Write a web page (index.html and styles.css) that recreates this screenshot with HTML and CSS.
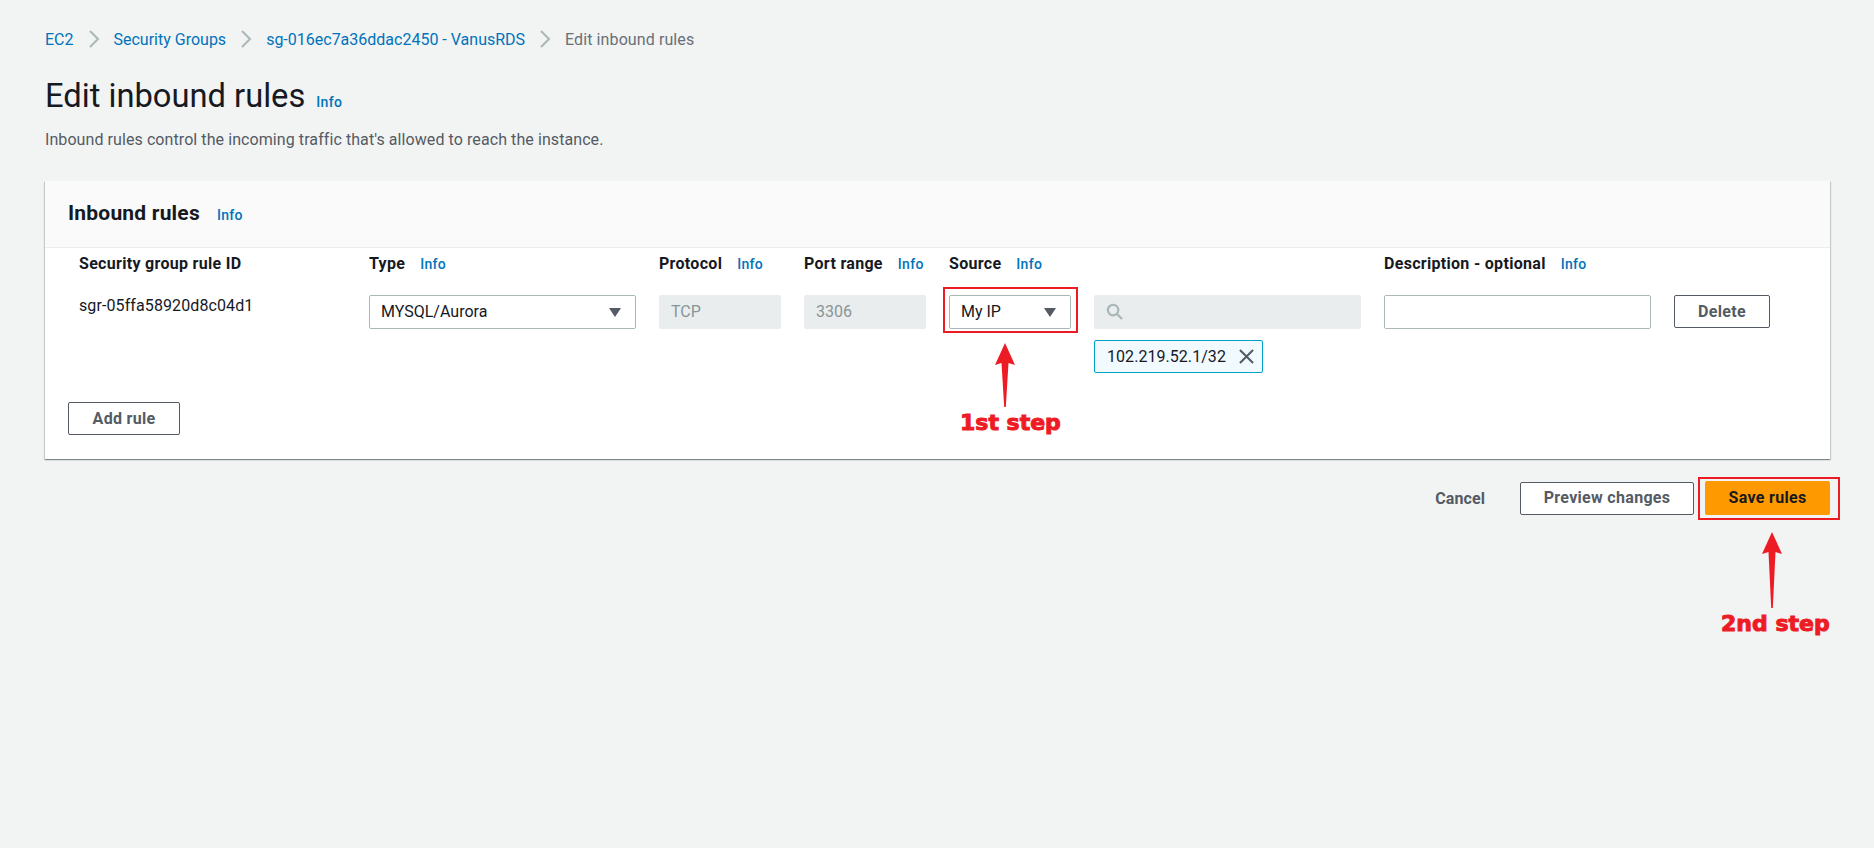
FILE: index.html
```html
<!DOCTYPE html>
<html lang="en">
<head>
    <meta charset="UTF-8">
    <title>Edit inbound rules</title>
    <link rel="stylesheet" href="styles.css">
</head>
<body>
    <div class="page">
        <nav class="crumbs">
            <a href="#">EC2</a>
            <svg class="chev" viewBox="0 0 12 18"><path d="M2 1l8 8-8 8"/></svg>
            <a href="#">Security Groups</a>
            <svg class="chev" viewBox="0 0 12 18"><path d="M2 1l8 8-8 8"/></svg>
            <a href="#">sg-016ec7a36ddac2450 - VanusRDS</a>
            <svg class="chev" viewBox="0 0 12 18"><path d="M2 1l8 8-8 8"/></svg>
            <span class="current">Edit inbound rules</span>
        </nav>

        <div class="title-row">
            <h1>Edit inbound rules</h1>
            <a href="#" class="info">Info</a>
        </div>
        <p class="lead">Inbound rules control the incoming traffic that's allowed to reach the instance.</p>

        <section class="card">
            <div class="card-head">
                <h2>Inbound rules</h2>
                <a href="#" class="info">Info</a>
            </div>
            <div class="rules">
                <div class="th">Security group rule ID</div>
                <div class="th">Type <a href="#" class="info">Info</a></div>
                <div class="th">Protocol <a href="#" class="info">Info</a></div>
                <div class="th">Port range <a href="#" class="info">Info</a></div>
                <div class="th">Source <a href="#" class="info">Info</a></div>
                <div class="th"></div>
                <div class="th">Description - optional <a href="#" class="info">Info</a></div>
                <div class="th"></div>

                <div class="rule-id">sgr-05ffa58920d8c04d1</div>
                <div class="select"><span>MYSQL/Aurora</span><i class="caret"></i></div>
                <div class="field disabled">TCP</div>
                <div class="field disabled">3306</div>
                <div class="select"><span>My IP</span><i class="caret"></i></div>
                <div class="source-col">
                    <div class="field disabled search">
                        <svg class="glass" viewBox="0 0 18 18"><circle cx="7.5" cy="7.5" r="5.5"/><path d="M11.5 11.5l5.5 5.5"/></svg>
                    </div>
                    <div class="token">
                        <span>102.219.52.1/32</span>
                        <svg class="close" viewBox="0 0 16 16"><path d="M1 1l14 14M15 1L1 15"/></svg>
                    </div>
                </div>
                <div class="field"></div>
                <button class="btn">Delete</button>
            </div>
            <div class="card-foot">
                <button class="btn btn-add">Add rule</button>
            </div>
        </section>

        <div class="actions">
            <a href="#" class="cancel">Cancel</a>
            <button class="btn btn-preview">Preview changes</button>
            <button class="btn btn-save">Save rules</button>
        </div>

        <!-- red annotations drawn on top of the screenshot -->
        <div class="mark mark-source"></div>
        <div class="mark mark-save"></div>
        <svg class="arrow arrow-one" viewBox="0 0 22 64"><path d="M11 0L21 22 14.5 20 11.8 64h-1.6L7.5 20 1 22z"/></svg>
        <svg class="arrow arrow-two" viewBox="0 0 22 76"><path d="M11 0L21 22 14.5 20 11.8 76h-1.6L7.5 20 1 22z"/></svg>
        <div class="step step-one">1st step</div>
        <div class="step step-two">2nd step</div>
    </div>
</body>
</html>
```

FILE: styles.css
```css
* {
    box-sizing: border-box;
}
body {
    margin: 0;
    background: #f2f3f3;
    color: #16191f;
    font-family: Roboto, sans-serif;
    font-size: 16px;
}
a {
    color: #0073bb;
    text-decoration: none;
}
.page {
    position: relative;
    height: 848px;
    padding: 28px 44px 0 45px;
}
.crumbs {
    display: flex;
    align-items: center;
    height: 22px;
    font-size: 16px;
}
.chev {
    width: 12px;
    height: 18px;
    margin: 0 14px;
    fill: none;
    stroke: #aab7b8;
    stroke-width: 2;
}
.current {
    color: #687078;
    letter-spacing: 0.1px;
}
.title-row {
    display: flex;
    align-items: baseline;
    margin-top: 26px;
}
h1 {
    margin: 0;
    font-size: 32.7px;
    font-weight: 400;
    line-height: 40px;
}
.info {
    font-size: 14px;
    font-weight: 500;
    letter-spacing: 0.3px;
}
.title-row .info {
    margin-left: 11px;
}
.lead {
    margin: 13px 0 0;
    height: 22px;
    line-height: 22px;
    color: #545b64;
    font-size: 16px;
    letter-spacing: 0.08px;
}
.card {
    height: 278px;
    margin-top: 30px;
    background: #fff;
    box-shadow: 0 1px 1px 0 rgba(0, 28, 36, 0.3), 1px 1px 1px 0 rgba(0, 28, 36, 0.15), -1px 1px 1px 0 rgba(0, 28, 36, 0.15);
}
.card-head {
    display: flex;
    align-items: center;
    height: 67px;
    padding: 0 0 3px 23px;
    background: #fafafa;
    border-bottom: 1px solid #eaeded;
}
.card-head .info {
    padding-top: 5px;
}
h2 {
    margin: 0 17px 0 0;
    font-size: 21px;
    font-weight: 700;
    letter-spacing: 0.2px;
}
.rules {
    display: grid;
    grid-template-columns: 267px 267px 122px 122px 122px 267px 267px 96px;
    grid-template-rows: 31px auto;
    column-gap: 23px;
    row-gap: 16px;
    padding: 0 0 0 34px;
    height: 154px;
}
.th {
    display: flex;
    align-items: center;
    gap: 15px;
    font-weight: 700;
    font-size: 16px;
    letter-spacing: 0.3px;
}
.rule-id {
    padding-top: 1px;
    color: #16191f;
    font-size: 16px;
    line-height: 20px;
    letter-spacing: 0.1px;
}
.select,
.field {
    height: 34px;
    border: 1px solid #aab7b8;
    border-radius: 2px;
    background: #fff;
}
.select {
    display: flex;
    align-items: center;
    justify-content: space-between;
    padding: 0 14px 2px 11px;
    font-size: 16px;
}
.caret {
    width: 0;
    height: 0;
    margin-top: 2px;
    border-left: 6px solid transparent;
    border-right: 6px solid transparent;
    border-top: 9px solid #545b64;
}
.field.disabled {
    display: flex;
    align-items: center;
    padding: 0 0 1px 11px;
    background: #eaeded;
    border-color: #eaeded;
    color: #879596;
}
.source-col {
    display: flex;
    flex-direction: column;
    gap: 11px;
    align-items: flex-start;
}
.search {
    width: 100%;
}
.glass {
    width: 17px;
    height: 17px;
    fill: none;
    stroke: #aab7b8;
    stroke-width: 2.4;
}
.token {
    display: flex;
    align-items: center;
    gap: 13px;
    height: 33px;
    padding: 0 8px 0 12px;
    border: 1px solid #00a1c9;
    border-radius: 2px;
    background: #f1faff;
    font-size: 16px;
    letter-spacing: 0.05px;
}
.close {
    width: 15px;
    height: 15px;
    fill: none;
    stroke: #545b64;
    stroke-width: 2.2;
}
.btn {
    height: 33px;
    padding: 0 0 1px;
    border: 1px solid #545b64;
    border-radius: 2px;
    background: #fff;
    color: #545b64;
    font-family: Roboto, sans-serif;
    font-size: 16px;
    font-weight: 700;
    letter-spacing: 0.3px;
}
.card-foot {
    padding-left: 23px;
}
.btn-add {
    width: 112px;
}
.actions {
    display: flex;
    align-items: center;
    justify-content: flex-end;
    margin-top: 22px;
    height: 34px;
}
.cancel {
    margin-right: 35px;
    color: #545b64;
    font-weight: 700;
    letter-spacing: 0.1px;
}
.btn-preview {
    width: 174px;
    margin-right: 11px;
}
.btn-save {
    width: 125px;
    height: 34px;
    border: none;
    background: #ff9900;
    color: #16191f;
}
.mark {
    position: absolute;
    border: 2px solid #ed1c24;
}
.mark-source {
    left: 943px;
    top: 287px;
    width: 135px;
    height: 46px;
}
.mark-save {
    left: 1698px;
    top: 477px;
    width: 142px;
    height: 43px;
}
.arrow {
    position: absolute;
    width: 22px;
    fill: #ed1c24;
}
.arrow-one {
    left: 994px;
    top: 343px;
    height: 64px;
}
.arrow-two {
    left: 1761px;
    top: 532px;
    height: 76px;
}
.step {
    position: absolute;
    color: #ed1c24;
    font-family: "DejaVu Sans", sans-serif;
    font-size: 22px;
    font-weight: 700;
    line-height: 24px;
    white-space: nowrap;
    -webkit-text-stroke: 1px #ed1c24;
}
.step-one {
    left: 960px;
    top: 411px;
}
.step-two {
    left: 1721px;
    top: 612px;
}
```
